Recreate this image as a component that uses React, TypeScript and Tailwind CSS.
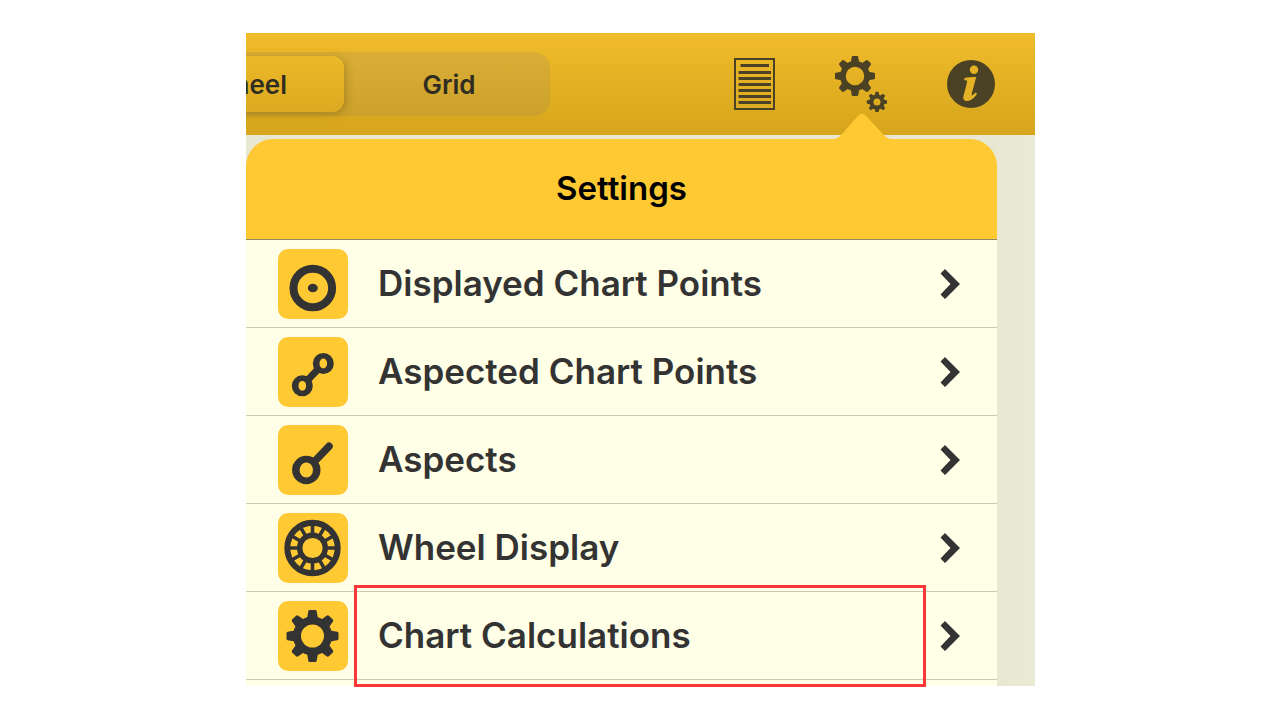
import type { ReactNode } from "react";

function Gear({ hole = 11.5 }: { hole?: number }) {
  const body = 19.5;
  return (
    <>
      <circle r={(body + hole) / 2} fill="none" stroke="currentColor" strokeWidth={body - hole} />
      {[0, 45, 90, 135, 180, 225, 270, 315].map((angle) => (
        <path
          key={angle}
          d="M-5.5 -17.5 L-4.2 -24.8 Q-4 -26 -2.8 -26 H2.8 Q4 -26 4.2 -24.8 L5.5 -17.5 Z"
          fill="currentColor"
          transform={`rotate(${angle})`}
        />
      ))}
    </>
  );
}

function DocumentIcon() {
  return (
    <svg className="h-[52px] w-[41px]" viewBox="0 0 41 52" aria-hidden="true">
      <rect x="1" y="1" width="39" height="50" fill="none" stroke="currentColor" strokeWidth="2" />
      <path
        d="M6.5 7.5H35M4.5 14.5H37M4.5 20.5H37M4.5 26.5H37M4.5 32.5H37M4.5 38.5H37M4.5 44.5H37"
        stroke="currentColor"
        strokeWidth="3"
      />
    </svg>
  );
}

function GearsIcon() {
  return (
    <svg className="h-14 w-[52px]" viewBox="0 0 52 56" aria-hidden="true">
      <g transform="translate(20 20) scale(0.77)">
        <Gear hole={12} />
      </g>
      <g transform="translate(42 46) scale(0.39)">
        <Gear hole={9} />
      </g>
    </svg>
  );
}

function InfoIcon() {
  return (
    <svg className="size-12" viewBox="0 0 48 48" aria-hidden="true">
      <circle cx="24" cy="24" r="24" fill="currentColor" />
      <g fill="#e5b226">
        <circle cx="27" cy="9.7" r="4.2" />
        <path d="M17.3 18.2 C20.5 17.2 25 17 29.2 17 L24.8 33.5 C24.3 35.8 24.8 36 26 34.8 L28.7 32.5 L30 33.8 C27.5 38 23.5 41 20 41 C16.6 41 15.8 38.6 16.6 35.5 L20 22.5 C20.5 20.6 20 20.3 17.3 20.3 Z" />
      </g>
    </svg>
  );
}

function Chevron() {
  return (
    <svg className="h-[30px] w-5 shrink-0" viewBox="0 0 20 30" aria-hidden="true">
      <path d="M0.5 4.5 L5 0 L20 15 L5 30 L0.5 25.5 L10.5 15 Z" fill="currentColor" />
    </svg>
  );
}

const pointsIcon = (
  <>
    <circle cx="34.8" cy="39" r="19.3" fill="none" stroke="currentColor" strokeWidth="8" />
    <ellipse cx="34.8" cy="39" rx="5" ry="4.3" fill="currentColor" />
  </>
);

const aspectedIcon = (
  <>
    <path d="M24.3 48.8 L45.3 26.5" stroke="currentColor" strokeWidth="7" />
    <circle cx="45.3" cy="26.5" r="10.5" fill="currentColor" />
    <circle cx="24.3" cy="48.8" r="10.5" fill="currentColor" />
    <ellipse cx="45.3" cy="26.5" rx="3.8" ry="4.9" fill="#ffc933" />
    <ellipse cx="24.3" cy="48.8" rx="3.8" ry="4.9" fill="#ffc933" />
  </>
);

const aspectsIcon = (
  <>
    <path d="M28.3 45 L51 21.3" stroke="currentColor" strokeWidth="7.5" strokeLinecap="round" />
    <circle cx="28.3" cy="45" r="14.2" fill="currentColor" />
    <ellipse cx="28.3" cy="45" rx="6.7" ry="7.4" fill="#ffc933" />
  </>
);

const wheelIcon = (
  <g fill="none" stroke="currentColor" transform="translate(34.5 35)">
    <circle r="25.2" strokeWidth="6" />
    <circle r="12.8" strokeWidth="5.4" />
    {[0, 30, 60, 90, 120, 150, 180, 210, 240, 270, 300, 330].map((angle) => (
      <path key={angle} d="M0 -14 V-24" strokeWidth="3.6" transform={`rotate(${angle})`} />
    ))}
  </g>
);

const calculationsIcon = (
  <g transform="translate(34.5 35)">
    <Gear />
  </g>
);

const items: { label: string; icon: ReactNode; marked?: boolean }[] = [
  { label: "Displayed Chart Points", icon: pointsIcon },
  { label: "Aspected Chart Points", icon: aspectedIcon },
  { label: "Aspects", icon: aspectsIcon },
  { label: "Wheel Display", icon: wheelIcon },
  { label: "Chart Calculations", icon: calculationsIcon, marked: true },
];

function Toolbar() {
  return (
    <header className="flex h-[102px] items-center justify-between overflow-hidden bg-linear-to-b from-[#f0bc2b] to-[#d6a51b] pr-10">
      <div className="-ml-[100px] flex h-16 w-[404px] shrink-0 gap-2 rounded-2xl bg-[#787880]/15 p-1 text-[26px] font-semibold text-[#2f2c22]">
        <button
          type="button"
          aria-pressed="true"
          className="flex-1 rounded-xl bg-linear-to-b from-[#ebb828] to-[#dcaa20] shadow-[2px_2px_8px_rgba(80,60,0,0.3)]"
        >
          Wheel
        </button>
        <button type="button" aria-pressed="false" className="flex-1 rounded-xl">
          Grid
        </button>
      </div>
      <div className="flex items-center gap-[60px] text-[#4b4226]">
        <button type="button" aria-label="Report">
          <DocumentIcon />
        </button>
        <button type="button" aria-label="Settings">
          <GearsIcon />
        </button>
        <button type="button" aria-label="Information">
          <InfoIcon />
        </button>
      </div>
    </header>
  );
}

function SettingsPanel() {
  return (
    <section className="relative">
      <svg
        className="absolute -top-[26px] right-[104px] h-[27px] w-[62px] text-[#ffc933]"
        viewBox="0 0 62 27"
        aria-hidden="true"
      >
        <path
          d="M0 27 V26 C6 26 8 24 11 21 L26 4 Q31 -2.5 36 4 L52 21 C55 24 57 26 62 26 V27 Z"
          fill="currentColor"
        />
      </svg>
      <h1 className="flex h-[100px] items-center justify-center rounded-t-[27px] bg-[#ffc933] text-[33px] font-semibold text-black">
        Settings
      </h1>
      <ul className="bg-[#fffee6]">
        {items.map(({ label, icon, marked }) => (
          <li key={label} className="relative border-t border-[#cacab4] first:border-[#908a60]">
            <a href="#" className="flex h-[87px] items-center pr-[37px] pl-8 text-[#333333]">
              <svg className="size-[70px] shrink-0 rounded-[10px] bg-[#ffc933]" viewBox="0 0 70 70" aria-hidden="true">
                {icon}
              </svg>
              <span className="ml-[30px] flex-1 text-[35px] font-semibold">{label}</span>
              <Chevron />
            </a>
            {marked && (
              <div className="pointer-events-none absolute -top-[7px] right-[71px] -bottom-2 left-[108px] border-3 border-[#fb3636]" />
            )}
          </li>
        ))}
        <li className="h-[7px] border-t border-[#cacab4]" aria-hidden="true" />
      </ul>
    </section>
  );
}

export default function App() {
  return (
    <main className="min-h-screen bg-white py-[33px] pl-px font-['Inter',sans-serif]">
      <div className="mx-auto max-w-[789px]">
        <Toolbar />
        <div className="bg-linear-to-r from-[#e8e8d2] from-95% to-[#ebebd5] pt-1 pr-[38px]">
          <SettingsPanel />
        </div>
      </div>
    </main>
  );
}
